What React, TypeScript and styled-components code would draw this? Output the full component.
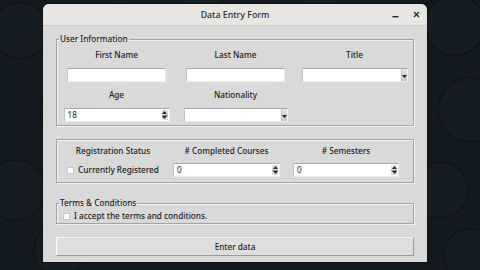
import React from "react";
import styled, { createGlobalStyle } from "styled-components";

const GlobalStyle = createGlobalStyle`
  html, body {
    margin: 0;
    padding: 0;
    background: #111a1e;
  }
  * {
    box-sizing: border-box;
  }
`;

const Desktop = styled.div`
  position: relative;
  width: 480px;
  height: 270px;
  overflow: hidden;
  background: #121a1f;
  font-family: "Noto Sans", "Open Sans", sans-serif;
  color: #1e1e1e;
`;

const Wallpaper = styled.svg`
  position: absolute;
  inset: 0;
`;

const Window = styled.div`
  position: absolute;
  left: 43px;
  top: 4px;
  width: 384px;
  height: 258px;
  border-radius: 6px 6px 0 0;
  background: #d9d9d9;
  display: flex;
  flex-direction: column;
  overflow: hidden;
  box-shadow: 0 0 0 1px rgba(0, 0, 0, 0.4);
`;

const TitleBar = styled.div`
  height: 22px;
  flex: none;
  display: grid;
  grid-template-columns: 1fr auto 1fr;
  align-items: center;
  background: #e8e6e3;
  border-bottom: 1px solid #cfccc8;
`;

const Title = styled.div`
  grid-column: 2;
  font-size: 8.8px;
  font-weight: 500;
  color: #2a2a2a;
`;

const Controls = styled.div`
  grid-column: 3;
  justify-self: end;
  display: flex;
  align-items: center;
  gap: 14px;
  padding-right: 7px;
  color: #2a2a2a;
`;

const Body = styled.div`
  flex: 1;
  display: flex;
  flex-direction: column;
  padding: 7px 13px 8px 13px;
`;

const Frame = styled.fieldset<{ $gapAfter: number }>`
  margin: 0 0 ${({ $gapAfter }) => $gapAfter}px 0;
  padding: 0;
  min-width: 0;
  border: 1px solid #a3a3a3;
  box-shadow: inset 1px 1px 0 #f2f2f2, 1px 1px 0 #f2f2f2;
`;

const Legend = styled.legend`
  font-size: 8.2px;
  font-weight: 500;
  line-height: 12px;
  padding: 0 1px;
  margin-left: 2px;
  color: #222;
`;

const InfoGrid = styled.div`
  display: grid;
  grid-template-columns: repeat(3, 119px);
  grid-template-rows: 12px 14px 12px 14px;
  row-gap: 7px;
  justify-items: center;
  align-items: center;
  padding: 4px 0 3px 0;
`;

const StatusGrid = styled.div`
  display: grid;
  grid-template-columns: 112px 115px 124px;
  grid-template-rows: 12px 14px;
  row-gap: 6px;
  justify-items: center;
  align-items: center;
  padding: 5px 0 5px 0;
`;

const Label = styled.div`
  font-size: 8.2px;
  font-weight: 500;
  line-height: 12px;
  color: #222;
  white-space: nowrap;
`;

const Field = styled.div<{ $width: number }>`
  position: relative;
  width: ${({ $width }) => $width}px;
  height: 14px;
  background: #ffffff;
  border-top: 1px solid #a8a8a8;
  border-left: 1px solid #c4c4c4;
  border-right: 1px solid #ededed;
  border-bottom: 1px solid #ededed;
  font-size: 8.2px;
  line-height: 12px;
  padding-left: 3px;
  display: flex;
  align-items: center;
`;

const DropButton = styled.div`
  position: absolute;
  right: 0;
  top: 0;
  bottom: 0;
  width: 6px;
  background: linear-gradient(#e4e4e4, #c8c8c8);
  border-left: 1px solid #bdbdbd;
  display: flex;
  align-items: flex-end;
  justify-content: center;
  padding-bottom: 3px;
`;

const SpinButtons = styled.div`
  position: absolute;
  right: 1px;
  top: 1px;
  bottom: 1px;
  width: 6px;
  background: #dcdcdc;
  display: flex;
  flex-direction: column;
  align-items: center;
  justify-content: space-between;
  padding: 1px 0;
`;

const SpinDivider = styled.div`
  width: 6px;
  height: 1px;
  background: #8a8a8a;
`;

const CheckRow = styled.label<{ $indent?: number }>`
  display: flex;
  align-items: center;
  gap: 4px;
  font-size: 8.2px;
  font-weight: 500;
  line-height: 12px;
  color: #222;
  white-space: nowrap;
  padding-left: ${({ $indent }) => $indent ?? 0}px;
`;

const Box = styled.span`
  width: 7px;
  height: 7px;
  background: #ffffff;
  border: 1px solid #c9c9c9;
  display: inline-block;
  flex: none;
`;

const TermsBody = styled.div`
  height: 14px;
  display: flex;
  align-items: center;
`;

const SubmitButton = styled.button`
  height: 19px;
  width: 100%;
  margin: 0;
  padding: 0;
  background: #dedede;
  border-top: 1px solid #f6f6f6;
  border-left: 1px solid #f6f6f6;
  border-right: 1px solid #9a9a9a;
  border-bottom: 1px solid #9a9a9a;
  font-family: "Noto Sans", "Open Sans", sans-serif;
  font-size: 8.2px;
  font-weight: 500;
  color: #222;
`;

const Triangle = ({ up }: { up?: boolean }) => (
  <svg width="5" height="3" viewBox="0 0 5 3">
    <polygon points={up ? "0,3 5,3 2.5,0" : "0,0 5,0 2.5,3"} fill="#2a2a2a" />
  </svg>
);

const Combo = ({ width }: { width: number }) => (
  <Field $width={width}>
    <DropButton>
      <Triangle />
    </DropButton>
  </Field>
);

const Spin = ({ width, value }: { width: number; value: string }) => (
  <Field $width={width}>
    {value}
    <SpinButtons>
      <Triangle up />
      <SpinDivider />
      <Triangle />
    </SpinButtons>
  </Field>
);

const circles = [
  [20, 30, 28], [70, 110, 30], [15, 190, 30], [60, 250, 26],
  [455, 25, 30], [470, 110, 32], [440, 190, 28], [470, 255, 26],
  [200, -20, 30], [320, -18, 28], [120, -22, 26],
];

export default function App() {
  return (
    <>
      <GlobalStyle />
      <Desktop>
        <Wallpaper width="480" height="270" viewBox="0 0 480 270">
          {circles.map(([cx, cy, r], i) => (
            <circle key={i} cx={cx} cy={cy} r={r} fill="#151d22" stroke="#0e1417" strokeWidth="1.5" />
          ))}
        </Wallpaper>
        <Window>
          <TitleBar>
            <Title>Data Entry Form</Title>
            <Controls>
              <svg width="7" height="7" viewBox="0 0 7 7">
                <rect x="0.5" y="5" width="6" height="1.4" fill="#2a2a2a" />
              </svg>
              <svg width="7" height="7" viewBox="0 0 7 7">
                <path d="M1 1 L6 6 M6 1 L1 6" stroke="#2a2a2a" strokeWidth="1.4" />
              </svg>
            </Controls>
          </TitleBar>
          <Body>
            <Frame $gapAfter={13}>
              <Legend>User Information</Legend>
              <InfoGrid>
                <Label>First Name</Label>
                <Label>Last Name</Label>
                <Label>Title</Label>
                <Field $width={99} />
                <Field $width={99} />
                <Combo width={106} />
                <Label>Age</Label>
                <Label>Nationality</Label>
                <span />
                <Spin width={106} value="18" />
                <Combo width={104} />
                <span />
              </InfoGrid>
            </Frame>
            <Frame $gapAfter={14}>
              <StatusGrid>
                <Label>Registration Status</Label>
                <Label># Completed Courses</Label>
                <Label># Semesters</Label>
                <CheckRow>
                  <Box />
                  Currently Registered
                </CheckRow>
                <Spin width={107} value="0" />
                <Spin width={106} value="0" />
              </StatusGrid>
            </Frame>
            <Frame $gapAfter={13}>
              <Legend>Terms &amp; Conditions</Legend>
              <TermsBody>
                <CheckRow $indent={6}>
                  <Box />
                  I accept the terms and conditions.
                </CheckRow>
              </TermsBody>
            </Frame>
            <SubmitButton>Enter data</SubmitButton>
          </Body>
        </Window>
      </Desktop>
    </>
  );
}
